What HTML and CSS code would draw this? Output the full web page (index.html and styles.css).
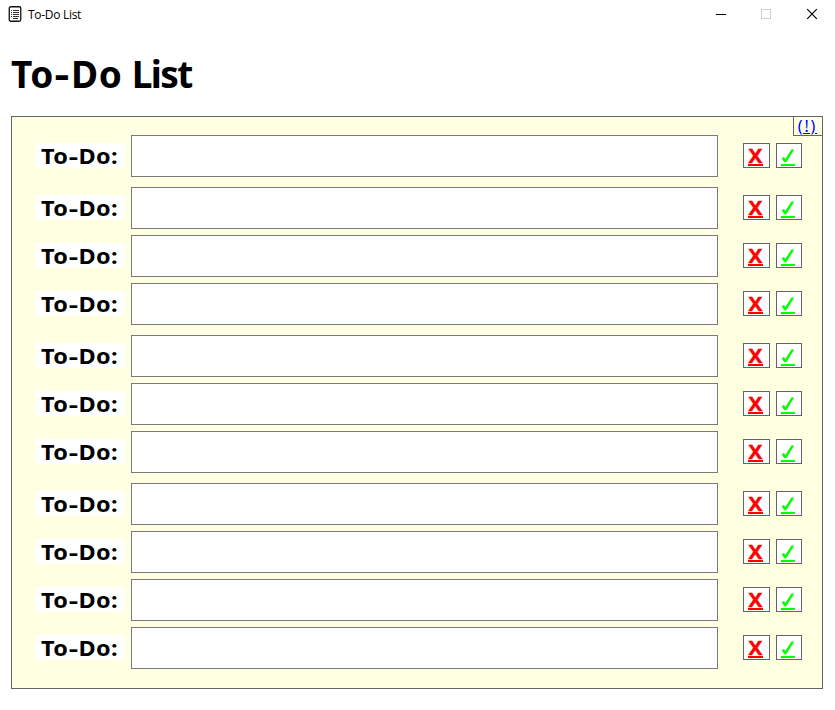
FILE: index.html
```
<!DOCTYPE html>
<html lang="en">
<head>
<meta charset="utf-8">
<title>To-Do List</title>
<link rel="stylesheet" href="styles.css">
</head>
<body>
<header class="titlebar">
  <svg class="app-icon" width="14" height="16" viewBox="0 0 14 16"><rect x="1.250" y="0.750" width="11.500" height="14.500" rx="1.500" fill="#fff" stroke="#111" stroke-width="1.300"/><path d="M3 4.500h1M5 4.500h6M3 6.500h1M5 6.500h6M3 8.500h1M5 8.500h6M3 10.500h1M5 10.500h6M5 12.500h5" stroke="#333"/></svg>
  <span class="caption">To-Do List</span>
  <div class="controls">
    <svg width="46" height="29" viewBox="0 0 46 29"><path d="M17 14.500h10" stroke="#000"/></svg>
    <svg width="46" height="29" viewBox="0 0 46 29"><rect x="16.500" y="9.500" width="9" height="9" fill="none" stroke="#ccc"/></svg>
    <svg width="46" height="29" viewBox="0 0 46 29"><path d="M16.200 9.200l9.600 9.600M25.800 9.200l-9.600 9.600" stroke="#000" stroke-width="1.200"/></svg>
  </div>
</header>
<h1 class="heading">To<span class="hyphen">-</span>Do <span class="tight">List</span></h1>
<main class="panel">
  <a class="info">(!)</a>
  <div class="rows" id="rows"></div>
</main>
<script src="app.js"></script>
</body>
</html>
```
FILE: styles.css
```
* { box-sizing: border-box; }
body {
  margin: 0;
  height: 710px;
  overflow: hidden;
  background: #fff;
  color: #000;
  font-family: "Noto Sans", "Open Sans", sans-serif;
}
.titlebar { display: flex; height: 29px; padding-left: 8px; align-items: center; }
.app-icon { flex: none; margin-top: -1px; }
.caption { margin-left: 6px; font: 12px/16px "Open Sans", sans-serif; letter-spacing: -0.3px; }
.controls { display: flex; margin-left: auto; margin-right: -2px; }
.heading { margin: 17px 0 0 11px; height: 70px; font-size: 37px; line-height: 56px; font-weight: 700; white-space: nowrap; letter-spacing: 0.6px; }
.hyphen { display: inline-block; margin: 0 0.06em; transform: scaleX(1.25); }
.tight { margin-left: -1px; letter-spacing: -1.6px; }
.panel {
  position: relative;
  width: 812px;
  height: 573px;
  margin-left: 11px;
  padding: 18px 20px 0 24px;
  background: #ffffe1;
  border: 1px solid #646464;
}
.info {
  position: absolute;
  top: -1px;
  right: -1px;
  width: 30px;
  height: 20px;
  border: 1px solid #646464;
  color: #00f;
  font-size: 16px;
  line-height: 19px;
  text-align: center;
  text-decoration: underline;
  letter-spacing: 1.8px;
  padding-right: 1px;
}
.rows { display: flex; flex-direction: column; gap: 6px; }
.row { display: flex; align-items: center; height: 42px; }
.row:nth-child(3n + 1):not(:nth-child(10)) { margin-bottom: 4px; }
.label { width: 89px; height: 25px; margin-bottom: 1px; padding-left: 5px; background: #fff; font-size: 22px; line-height: 25px; font-weight: 700; white-space: nowrap; }
.label-text { display: inline-block; transform: scaleX(1.065); transform-origin: left; letter-spacing: 0.25px; }
.field { width: 587px; height: 42px; margin-left: 6px; padding: 0 6px; border: 1px solid #7a7a7a; border-radius: 0; background: #fff; outline: none; }
.btn { height: 25px; margin-bottom: 1px; padding: 5px 0 0 4px; border: 1px solid #646464; background: #fff; }
.glyph { display: block; width: 15px; height: 17px; border-bottom: 2px solid; font-size: 19px; font-weight: 700; line-height: 14px; text-align: center; }
.letter { display: block; transform: scaleX(1.12); -webkit-text-stroke: 0.3px; }
.remove { width: 27px; margin-left: 25px; color: #f00; }
.done { width: 26px; margin-left: 6px; color: #0f0; }
.done .glyph { width: 14px; }
.check { display: block; }
```
FILE: app.js
```
const rows = document.getElementById("rows");
for (let i = 0; i < 11; i++) {
  const row = document.createElement("div");
  row.className = "row";
  row.innerHTML = '<span class="label"><span class="label-text">To<span class="hyphen">-</span>Do:</span></span><input class="field" type="text">' +
    '<a class="btn remove"><span class="glyph"><span class="letter">X</span></span></a>' +
    '<a class="btn done"><span class="glyph"><svg class="check" width="14" height="15" viewBox="0 0 14 15">' +
    '<path d="M0.800 9.400L2.900 7.800L4.300 9.900L10.400 0.500H13.200L5.200 13.300H3.300Z" fill="currentColor"/></svg></span></a>';
  rows.append(row);
}
```
